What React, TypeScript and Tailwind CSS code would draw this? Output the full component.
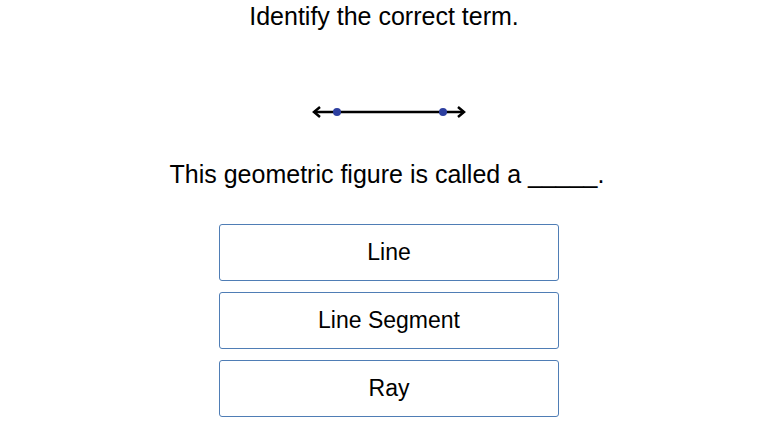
import React from "react";

const OPTIONS = ["Line", "Line Segment", "Ray"];

function LineFigure() {
  return (
    <svg width="160" height="16" viewBox="0 0 160 16" className="block">
      <line x1="3" y1="8" x2="153" y2="8" stroke="#000" strokeWidth="2.5" />
      <polyline points="9,3 3,8 9,13" fill="none" stroke="#000" strokeWidth="2.5" />
      <polyline points="147,3 153,8 147,13" fill="none" stroke="#000" strokeWidth="2.5" />
      <circle cx="26" cy="8" r="4" fill="#2d3fa0" />
      <circle cx="132" cy="8" r="4" fill="#2d3fa0" />
    </svg>
  );
}

export default function App() {
  return (
    <div className="w-[768px] h-[427px] bg-white text-black font-['Liberation_Sans',Arial,sans-serif] flex flex-col items-center overflow-hidden">
      <h1 className="mt-[2px] text-[25px] leading-[29px] font-normal">Identify the correct term.</h1>

      <div className="mt-[73px] ml-[13px]">
        <LineFigure />
      </div>

      <p className="mt-[40px] text-[25px] leading-[29px] ml-[6px]">
        This geometric figure is called a _____.
      </p>

      <div className="mt-[35px] ml-[10px] flex flex-col gap-[11px]">
        {OPTIONS.map((opt) => (
          <button
            key={opt}
            className="w-[340px] h-[57px] rounded-[3px] border border-[#4f7db5] bg-white text-[23px] flex items-center justify-center"
          >
            {opt}
          </button>
        ))}
      </div>
    </div>
  );
}
